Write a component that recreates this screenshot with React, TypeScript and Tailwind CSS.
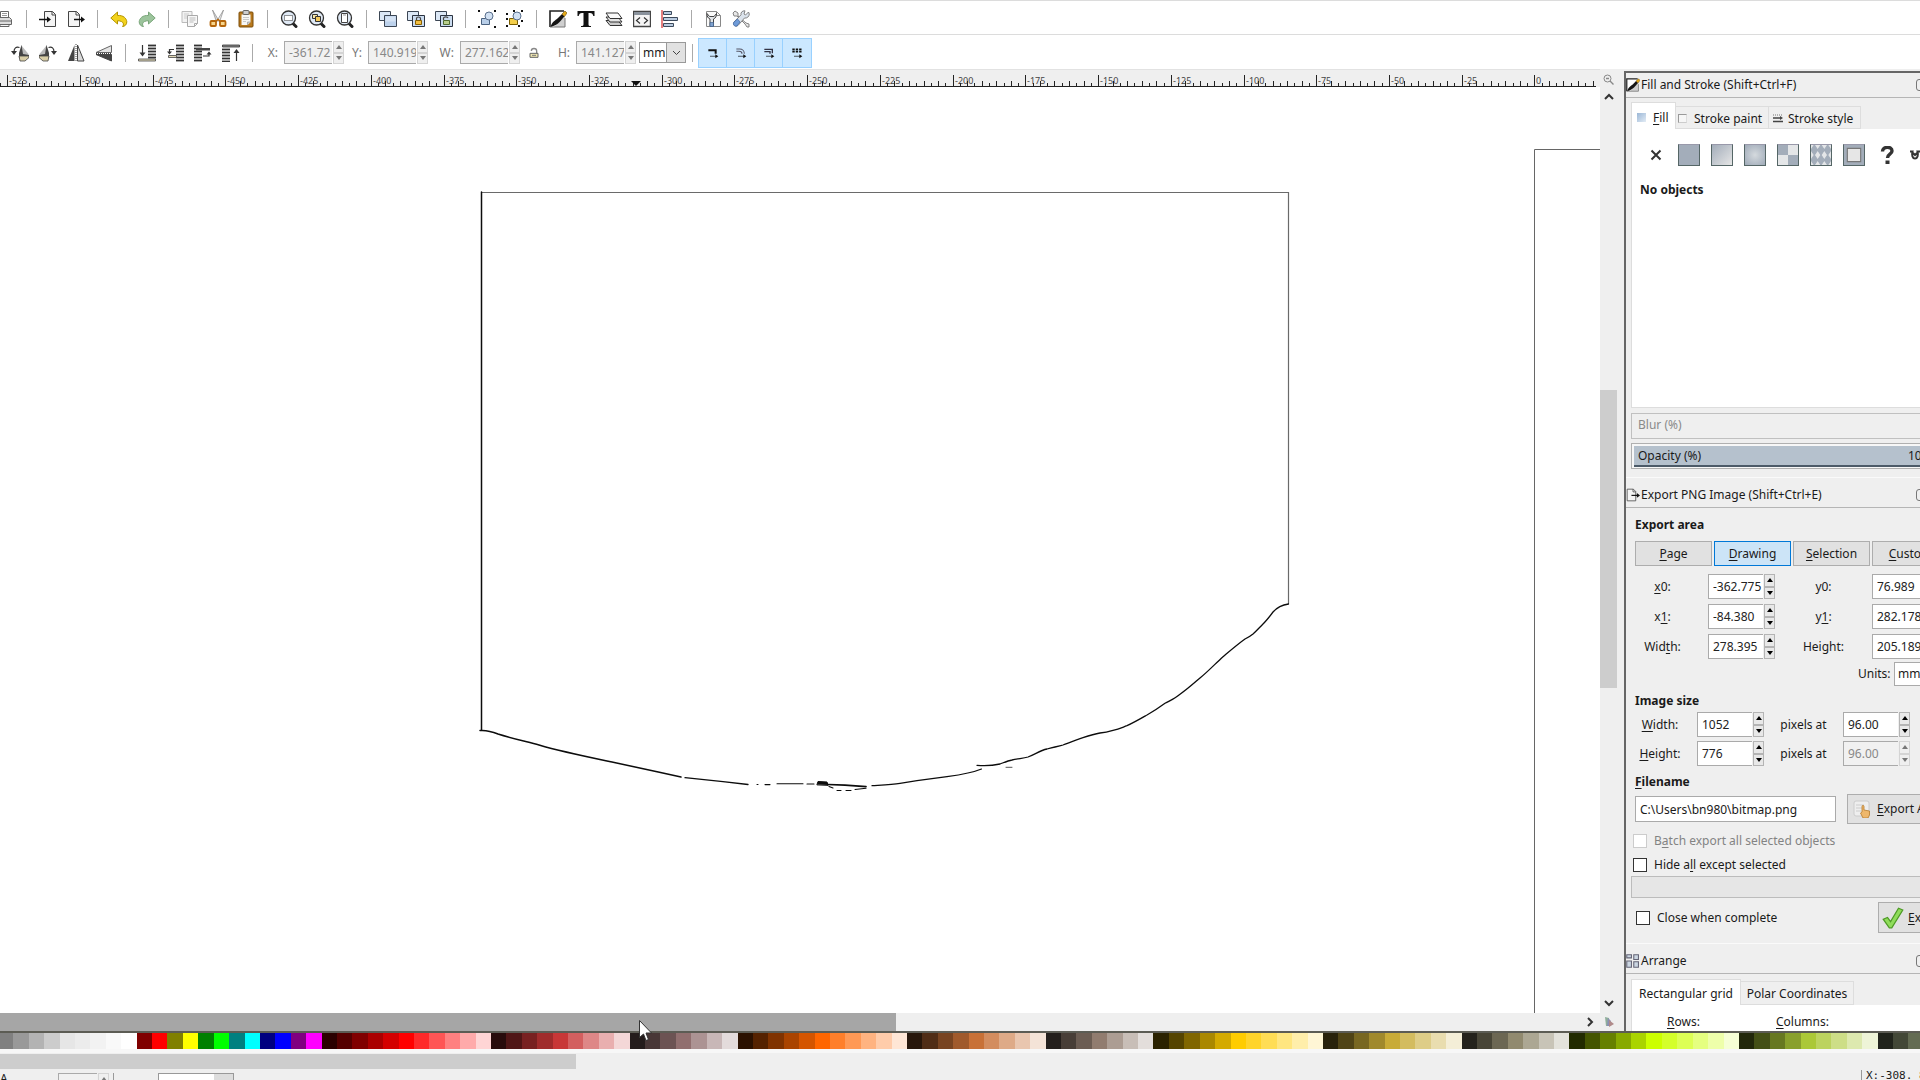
import type { ReactNode } from "react";
import { clsx } from "clsx";

const GRAYS = ["#808080", "#999999", "#b3b3b3", "#cccccc", "#e6e6e6", "#ececec", "#f2f2f2", "#f9f9f9", "#ffffff"];

const BASICS = [
  "#800000", "#ff0000", "#808000", "#ffff00", "#008000", "#00ff00",
  "#008080", "#00ffff", "#000080", "#0000ff", "#800080", "#ff00ff",
];

const REDS = [
  "#2b0000", "#550000", "#800000", "#aa0000", "#d40000", "#ff0000", "#ff2a2a", "#ff5555", "#ff8080", "#ffaaaa", "#ffd5d5",
  "#280b0b", "#501616", "#782121", "#a02c2c", "#c83737", "#d35f5f", "#de8787", "#e9afaf", "#f4d7d7",
  "#241c1c", "#483737", "#6c5353", "#916f6f", "#ac9393", "#c8b7b7", "#e3dbdb",
];

const ORANGES = [
  "#2b1100", "#552200", "#803300", "#aa4400", "#d45500", "#ff6600", "#ff7f2a", "#ff9955", "#ffb380", "#ffccaa", "#ffe6d5",
  "#28170b", "#502d16", "#784421", "#a05a2c", "#c87137", "#d38d5f", "#deaa87", "#e9c6af", "#f4e3d7",
  "#241f1c", "#483e37", "#6c5d53", "#917c6f", "#ac9d93", "#c8beb7", "#e3dedb",
];

const YELLOWS = [
  "#2b2200", "#554400", "#806600", "#aa8800", "#d4aa00", "#ffcc00", "#ffd42a", "#ffdd55", "#ffe680", "#ffeeaa", "#fff6d5",
  "#28220b", "#504416", "#786721", "#a0892c", "#c8ab37", "#d3bc5f", "#decd87", "#e9ddaf", "#f4eed7",
  "#24221c", "#484537", "#6c6753", "#918a6f", "#aca793", "#c8c4b7", "#e3e2db",
];

const LIMES = [
  "#222b00", "#445500", "#668000", "#88aa00", "#aad400", "#ccff00", "#d4ff2a", "#ddff55", "#e5ff80", "#eeffaa", "#f6ffd5",
  "#22280b", "#445016", "#677821", "#89a02c", "#abc837", "#bcd35f", "#cdde87", "#dde9af", "#eef4d7",
  "#21241c", "#434837", "#646c53",
];

const PALETTE = [...GRAYS, ...BASICS, ...REDS, ...ORANGES, ...YELLOWS, ...LIMES];

function Icon({ children, size = 18 }: { children: ReactNode; size?: number }) {
  return (
    <svg width={size} height={size} viewBox="0 0 18 18" fill="none" className="shrink-0" aria-hidden="true">
      {children}
    </svg>
  );
}

/* ---------- command bar icons ---------- */

const PrintIcon = () => (
  <Icon>
    <path d="M4.5 8V1.5h8V8" fill="#fff" stroke="#666" />
    <path d="M6 3.5h5M6 5.5h5" stroke="#999" />
    <path d="M1.5 9.5l2-2h10l2 2v5h-14z" fill="#ddd" stroke="#666" />
    <path d="M1.5 11h14M4 14.5h9v2H4z" stroke="#666" fill="#f6f6f6" />
  </Icon>
);

const ImportIcon = () => (
  <Icon>
    <path d="M5.5 1.5h8l3 3v12h-11z" fill="#f4f4f4" stroke="#444" />
    <path d="M13 1.5V5h3.500" stroke="#444" />
    <path d="M0 9.500h9" stroke="#111" strokeWidth="1.500" />
    <path d="M8 6.500l4 3-4 3z" fill="#111" />
  </Icon>
);

const ExportIcon = ({ size = 18 }: { size?: number }) => (
  <Icon size={size}>
    <path d="M1.500 1.500h8l3 3v12h-11z" fill="#f4f4f4" stroke="#444" />
    <path d="M9 1.500V5h3.500" stroke="#444" />
    <path d="M7 9.500h8" stroke="#111" strokeWidth="1.500" />
    <path d="M14 6.500l4 3-4 3z" fill="#111" />
  </Icon>
);

const UndoIcon = () => (
  <Icon>
    <path d="M.8 8L7.500 2v3.500c6-.5 9 3 9.300 6.200.2 3-2.300 4.800-4.300 4.800 1.500-1.500 2-5.500-5-5.800V14z" fill="#f2d21c" stroke="#b39300" />
  </Icon>
);

const RedoIcon = () => (
  <Icon>
    <path d="M17.200 8L10.500 2v3.500c-6-.5-9 3-9.300 6.200-.2 3 2.300 4.800 4.300 4.800-1.500-1.500-2-5.500 5-5.800V14z" fill="#9cc49c" stroke="#7aa67a" />
  </Icon>
);

const CopyIcon = () => (
  <Icon>
    <path d="M1 1.500h10v11H1z" fill="#f2f2f2" stroke="#bbb" />
    <path d="M3 4h5M3 6h3M3 8h3" stroke="#ccc" />
    <path d="M6.500 5.500h10v8l-3 3h-7z" fill="#f8f8f8" stroke="#a9a9a9" />
    <path d="M8.500 8h6M8.500 10h6M8.500 12h4" stroke="#bbb" />
    <path d="M13.500 16.500v-3h3" stroke="#a9a9a9" />
  </Icon>
);

const CutIcon = () => (
  <Icon>
    <path d="M3.500 0l6 10-2 2z" fill="#ddd" stroke="#888" strokeWidth=".7" />
    <path d="M14.500 0l-6 10 2 2z" fill="#eee" stroke="#888" strokeWidth=".7" />
    <rect x="1.500" y="11" width="5.500" height="5" rx="1" fill="#f6d58c" stroke="#b5660b" strokeWidth="1.800" />
    <rect x="11" y="11" width="5.500" height="5" rx="1" fill="#f6d58c" stroke="#b5660b" strokeWidth="1.800" />
    <path d="M6.500 11.500L9 9.500l2.500 2" stroke="#b5660b" strokeWidth="1.600" />
  </Icon>
);

const PasteIcon = () => (
  <Icon>
    <rect x="2" y="2" width="14" height="15" rx="1" fill="#b8791d" stroke="#7d4e0a" />
    <path d="M4.500 4.500h9V12l-3 3h-6z" fill="#f7f7f5" />
    <path d="M13.500 12h-3v3" fill="#ccc" stroke="#999" strokeWidth=".7" />
    <rect x="6" y=".5" width="6" height="4" rx="1" fill="#ccc" stroke="#666" />
    <path d="M6 7.500h6M6 9.500h6M6 11.500h3" stroke="#c9c9c9" />
  </Icon>
);

function MagnifierIcon({ children }: { children: ReactNode }) {
  return (
    <Icon>
      <path d="M13 13.500l3 3" stroke="#222" strokeWidth="3" strokeLinecap="round" />
      <circle cx="8.500" cy="8" r="7" fill="#dfe9f5" stroke="#333" strokeWidth="1.300" />
      {children}
    </Icon>
  );
}

const ZoomSelectionIcon = () => (
  <MagnifierIcon>
    <path d="M4.500 5.500h8v5h-8z" stroke="#333" strokeDasharray="1 1" fill="#fff" />
  </MagnifierIcon>
);

const ZoomDrawingIcon = () => (
  <MagnifierIcon>
    <path d="M4.500 4.500h5v4h-5z" fill="#f7e6a8" stroke="#333" />
    <path d="M7.500 6.500h5v5h-5z" fill="#f4c95c" stroke="#333" />
  </MagnifierIcon>
);

const ZoomPageIcon = () => (
  <MagnifierIcon>
    <path d="M5.500 3.500h6v9h-6z" fill="#fff" stroke="#444" />
    <path d="M7 5h3" stroke="#999" />
  </MagnifierIcon>
);

const DuplicateIcon = () => (
  <Icon>
    <path d="M.5 1.500h11v9H.5z" fill="#dce8f6" stroke="#3c4654" />
    <path d="M5.500 5.500h12v11h-12z" fill="#bdd2ec" stroke="#3c4654" />
    <path d="M6.500 6.500h10v5h-10z" fill="#d5e3f4" />
  </Icon>
);

function CloneIcon({ unlinked }: { unlinked?: boolean }) {
  return (
    <Icon>
      <path d="M.5 1.500h11v9H.5z" fill="#dce8f6" stroke="#3c4654" />
      <path d="M5.500 5.500h12v11h-12z" fill="#cbdcf0" stroke="#2b3340" />
      <path d={unlinked ? "M8.500 10V8c.5-1.500 4-1.500 4.500 0" : "M9.500 11V8.500c0-2 4-2 4 0V11"} stroke="#444" strokeWidth="1.200" />
      <path d="M8.500 10.500h6v4h-6z" fill={unlinked ? "#b9cf8c" : "#f4c042"} stroke={unlinked ? "#4f6a2f" : "#8a6100"} />
    </Icon>
  );
}

function GroupIcon({ ungroup }: { ungroup?: boolean }) {
  return (
    <Icon>
      <path d="M3.500 8.500h8v6h-8z" fill={ungroup ? "#f4cf4a" : "#b9cfe9"} stroke={ungroup ? "#7c6000" : "#4b6280"} />
      <circle cx="11" cy="6" r="4" fill="#d2e1f3" stroke="#5a6f8c" />
      <path
        d={
          ungroup
            ? "M0 3h2v2H0zM7 0h2v2H7zM15 0h2v2h-2zM0 8h2v2H0zM15 10h2v2h-2zM0 15h2v2H0zM12 15h2v2h-2z"
            : "M0 0h2v2H0zM16 0h2v2h-2zM0 16h2v2H0zM16 16h2v2h-2z"
        }
        fill="#111"
      />
    </Icon>
  );
}

const FillStrokeIcon = ({ size = 18 }: { size?: number }) => (
  <Icon size={size}>
    <path d="M1 1h14L1 15z" fill="#fff" />
    <path d="M16 6v11H5z" fill="#cfcfcf" />
    <path d="M1 17V1h14" stroke="#222" strokeWidth="1.600" />
    <path d="M1 17h15V8" stroke="#777" />
    <path d="M1.500 17C3 12 6 10.500 9 8l4-4 2.500 2.500C12 10 10 15 1.500 17z" fill="#151515" />
    <path d="M13 4l3-3 2 2-2.500 3.500z" fill="#e3a91a" stroke="#6b4a00" strokeWidth=".6" />
  </Icon>
);

const TextIcon = () => (
  <Icon>
    <path d="M.5 1h17v5h-1.200c-.4-2-1.300-3-3.300-3h-1.500v11.500c0 1 .7 1.500 2.500 1.500v1H4v-1c1.800 0 2.500-.5 2.500-1.500V3H5C3 3 2.100 4 1.700 6H.5z" fill="#111" />
  </Icon>
);

const LayersIcon = () => (
  <Icon>
    <path d="M1 10.500l4 5h12l-4-5z" fill="#ccc" stroke="#333" />
    <path d="M1 7l4 5h12l-4-5z" fill="#e3e3e3" stroke="#333" />
    <path d="M1 3l4 5.500h12L13 3z" fill="#fafafa" stroke="#333" />
  </Icon>
);

const XmlIcon = () => (
  <Icon>
    <path d="M.5 1.500h17v15H.5z" fill="#f5f5f5" stroke="#444" strokeWidth="1.400" />
    <path d="M1 2h16v3H1z" fill="#8a929c" />
    <path d="M7 7.500L3.500 10.500 7 13.500M11 7.500l3.500 3-3.500 3" stroke="#333" strokeWidth="1.200" />
  </Icon>
);

const AlignIcon = () => (
  <Icon>
    <path d="M1 0v18" stroke="#c00" />
    <path d="M2.500 1.500h8v3h-8zM2.500 7.500h14v3h-14zM2.500 13.500h10v3h-10z" fill="#b9cbe0" stroke="#3c4a5c" />
  </Icon>
);

const DocPropsIcon = () => (
  <Icon>
    <path d="M2.500 1.500h10l4 4v11h-14z" fill="#fbfbfb" stroke="#888" />
    <path d="M12.500 1.500v4h4" stroke="#888" />
    <path d="M3 3.500c0 3 .8 4.500 3 5.500v7h3.500V9c2.200-1 3-2.500 3-5.500L10 6.500H5.500z" fill="#e0e4e8" stroke="#444" />
    <path d="M6 12.500h3.500v4H6z" fill="#7fa2cf" stroke="#40608c" strokeWidth=".7" />
  </Icon>
);

const PrefsIcon = () => (
  <Icon>
    <path d="M1 3l2-2 3 2v3l8 7 3 1v3l-2 0-2-3-8-8H2z" fill="#e8e8e8" stroke="#777" strokeWidth=".9" />
    <path d="M16.500 2l-3 3-1.500-1L13 .8c-3-.3-4.500 2-4 4L2 12c-1.500 2 1 5.500 4 3.500L12.500 8c2.500.5 4.800-1.500 4.800-4z" fill="#dbe3ec" stroke="#777" strokeWidth=".9" />
    <path d="M2 12l3.500-3 2.500 3-3 4c-3 1-4.500-2-3-4z" fill="#6f9bd8" stroke="#3c66a3" strokeWidth=".7" />
  </Icon>
);

/* ---------- tool control icons ---------- */

function RotateIcon({ right }: { right?: boolean }) {
  const art = (
    <>
      <path d="M10 1v12h7.500v-3z" fill="#bbb" />
      <path d="M10.500 1l1.500 9 6 1v3H8V9z" fill="#444" />
      <path d="M8 12h10v1.500L14 17H9z" fill="#d8cda6" stroke="#444" strokeWidth=".8" />
      <path d="M8.500 3.500C5 2.500 3 4 3 8" stroke="#333" strokeWidth="1.200" />
      <path d="M0 7h6l-3 4z" fill="#333" />
    </>
  );
  return <Icon>{right ? <g transform="translate(18 0) scale(-1 1)">{art}</g> : art}</Icon>;
}

const FlipHorizontalIcon = () => (
  <Icon>
    <path d="M7.500 1v16H1z" fill="#444" />
    <path d="M10.500 1v16H17z" fill="#d9d9d9" stroke="#444" />
    <path d="M9 0v18" stroke="#444" strokeDasharray="1 1" />
  </Icon>
);

const FlipVerticalIcon = () => (
  <Icon>
    <path d="M16.500 1.500v7H1z" fill="#e4e4e4" stroke="#666" />
    <path d="M16.500 17v-6.500H1z" fill="#444" stroke="#444" />
    <path d="M1 9.500h16" stroke="#444" strokeDasharray="1 1" />
  </Icon>
);

const StripedStack = ({ x, y, rows }: { x: number; y: number; rows: number }) => (
  <>
    {Array.from({ length: rows }, (_, i) => (
      <path key={i} d={`M${x} ${y + i * 3}h8`} stroke="#333" strokeWidth="1.800" />
    ))}
  </>
);

const LowerBottomIcon = () => (
  <Icon>
    <StripedStack x={10} y={1.5} rows={5} />
    <path d="M4.500 1v9" stroke="#333" strokeWidth="1.200" />
    <path d="M1.500 8.500h6l-3 4z" fill="#333" />
    <path d="M.5 15h17v2H.5z" fill="#e2d9b8" stroke="#444" strokeWidth=".8" />
  </Icon>
);

const LowerIcon = () => (
  <Icon>
    <StripedStack x={10} y={1.5} rows={6} />
    <path d="M8 5.500H3.500V8" stroke="#333" strokeWidth="1.200" />
    <path d="M1 7.500h5l-2.500 3z" fill="#333" />
    <path d="M2.500 11.500h8v2h-8z" fill="#e2d9b8" stroke="#444" strokeWidth=".8" />
  </Icon>
);

const RaiseIcon = () => (
  <Icon>
    <StripedStack x={0} y={1.5} rows={6} />
    <path d="M2 4h14v2.500H2z" fill="#444" />
    <path d="M9 12h6V9.500" stroke="#333" strokeWidth="1.200" />
    <path d="M12.500 10.500h5l-2.500-3z" fill="#333" />
  </Icon>
);

const RaiseTopIcon = () => (
  <Icon>
    <path d="M.5 1h17v2H.5z" fill="#888" stroke="#333" strokeWidth=".8" />
    <StripedStack x={0} y={5.5} rows={5} />
    <path d="M14.500 17V8" stroke="#333" strokeWidth="1.200" />
    <path d="M11.500 9h6l-3-4z" fill="#333" />
  </Icon>
);

const LockIcon = () => (
  <Icon size={12}>
    <path d="M5 6c0-5 8-5 8 0v4" stroke="#888" strokeWidth="2" />
    <path d="M3 9.500h12v6H3z" fill="#efe6b0" stroke="#666" strokeWidth="1.500" />
    <path d="M6 12.500h6" stroke="#777" strokeWidth="1.500" />
  </Icon>
);

const affectIcons = [
  {
    label: "Scale stroke width",
    art: <path d="M1 4h11v5" stroke="#111" strokeWidth="3" />,
  },
  {
    label: "Scale rounded corners",
    art: <path d="M1 2h5c4 0 7 3 7 7M1 5.500h4c3 0 4.500 1.500 4.500 3.500" stroke="#556" strokeWidth="1.600" />,
  },
  {
    label: "Move gradients",
    art: <path d="M1 2.500h12v6M1 6h8.500v3" stroke="#334" strokeWidth="2" />,
  },
  {
    label: "Move patterns",
    art: <path d="M1 2.500h14M1 6h14" stroke="#111" strokeWidth="2.500" strokeDasharray="3.600 1.500" />,
  },
];

const Chevron = ({ d }: { d: string }) => (
  <svg width="10" height="10" viewBox="0 0 10 10" fill="none" aria-hidden="true">
    <path d={d} stroke="#333" strokeWidth="2" />
  </svg>
);

/* ---------- small shared controls ---------- */

// An underscore in front of a letter marks the keyboard shortcut
function Mnemonic({ text }: { text: string }) {
  const at = text.indexOf("_");
  if (at < 0) return <>{text}</>;
  return (
    <span>
      {text.slice(0, at)}
      <u className="underline-offset-2">{text[at + 1]}</u>
      {text.slice(at + 2)}
    </span>
  );
}

type SpinProps = {
  id: string;
  value: string;
  disabled?: boolean;
  className?: string;
};

function Spin({ id, value, disabled, className }: SpinProps) {
  const arrow = disabled ? "fill-[#777]" : "fill-black";
  const button = clsx(
    "flex flex-1 items-center justify-center border",
    disabled ? "border-[#d4d4d4] bg-[#efefef]" : "border-[#b4b4b4] bg-[#e8e8e8]"
  );
  return (
    <div className={clsx("flex shrink-0 gap-px", className)}>
      <input
        id={id}
        defaultValue={value}
        disabled={disabled}
        className={clsx(
          "h-full min-w-0 flex-1 border border-r-0 border-[#aaa] pl-1 text-[12px] outline-none",
          disabled ? "bg-[#f1f1f1] text-[#888]" : "bg-white text-[#222]"
        )}
      />
      <div className="flex w-[11px] flex-col">
        <button type="button" aria-label="Increase" className={button}>
          <svg width="6" height="4" viewBox="0 0 6 4" className={arrow}><path d="M3 0l3 4H0z" /></svg>
        </button>
        <button type="button" aria-label="Decrease" className={button}>
          <svg width="6" height="4" viewBox="0 0 6 4" className={arrow}><path d="M3 4l3-4H0z" /></svg>
        </button>
      </div>
    </div>
  );
}

function Check({ id, text, disabled }: { id: string; text: string; disabled?: boolean }) {
  return (
    <div className="flex h-5 items-center gap-[7px]">
      <input
        id={id}
        type="checkbox"
        disabled={disabled}
        className={clsx("size-[14px] appearance-none border bg-white", disabled ? "border-[#ccc]" : "border-[#333]")}
      />
      <label htmlFor={id} className={disabled ? "text-[#838383]" : ""}>
        <Mnemonic text={text} />
      </label>
    </div>
  );
}

const Separator = ({ className = "w-[15px]" }: { className?: string }) => (
  <div className={clsx("flex shrink-0 justify-center", className)}>
    <div className="h-[18px] w-px bg-[#aaa]" />
  </div>
);

function ToolButton({ label, children }: { label: string; children: ReactNode }) {
  return (
    <button type="button" aria-label={label} className="flex h-7 w-7 shrink-0 items-center justify-center">
      {children}
    </button>
  );
}

/* ---------- toolbars ---------- */

function CommandBar() {
  return (
    <div className="flex h-[35px] items-center border-t border-b border-[#dcdcdc] bg-white pt-[3px]">
      <div className="-ml-[9px] flex items-center">
        <ToolButton label="Print"><PrintIcon /></ToolButton>
        <Separator />
        <ToolButton label="Import"><ImportIcon /></ToolButton>
        <ToolButton label="Export"><ExportIcon /></ToolButton>
        <Separator />
        <ToolButton label="Undo"><UndoIcon /></ToolButton>
        <ToolButton label="Redo"><RedoIcon /></ToolButton>
        <Separator />
        <ToolButton label="Copy"><CopyIcon /></ToolButton>
        <ToolButton label="Cut"><CutIcon /></ToolButton>
        <ToolButton label="Paste"><PasteIcon /></ToolButton>
        <Separator />
        <ToolButton label="Zoom selection"><ZoomSelectionIcon /></ToolButton>
        <ToolButton label="Zoom drawing"><ZoomDrawingIcon /></ToolButton>
        <ToolButton label="Zoom page"><ZoomPageIcon /></ToolButton>
        <Separator />
        <ToolButton label="Duplicate"><DuplicateIcon /></ToolButton>
        <ToolButton label="Clone"><CloneIcon /></ToolButton>
        <ToolButton label="Unlink clone"><CloneIcon unlinked /></ToolButton>
        <Separator />
        <ToolButton label="Group"><GroupIcon /></ToolButton>
        <ToolButton label="Ungroup"><GroupIcon ungroup /></ToolButton>
        <Separator />
        <ToolButton label="Fill and Stroke"><FillStrokeIcon /></ToolButton>
        <ToolButton label="Text and Font"><TextIcon /></ToolButton>
        <ToolButton label="Layers"><LayersIcon /></ToolButton>
        <ToolButton label="XML Editor"><XmlIcon /></ToolButton>
        <ToolButton label="Align and Distribute"><AlignIcon /></ToolButton>
        <Separator />
        <ToolButton label="Document Properties"><DocPropsIcon /></ToolButton>
        <ToolButton label="Preferences"><PrefsIcon /></ToolButton>
      </div>
    </div>
  );
}

function ToolSpin({ id, label, value, labelWidth }: { id: string; label: string; value: string; labelWidth: string }) {
  return (
    <>
      <label htmlFor={id} className={clsx("shrink-0 pr-[6px] text-right text-[#777]", labelWidth)}>{label}</label>
      <Spin id={id} value={value} disabled className="h-[23px] w-[60px]" />
    </>
  );
}

function ControlsBar() {
  return (
    <div className="flex h-[34px] items-center bg-white pt-px pl-[6px]">
      <ToolButton label="Rotate left"><RotateIcon /></ToolButton>
      <ToolButton label="Rotate right"><RotateIcon right /></ToolButton>
      <ToolButton label="Flip horizontal"><FlipHorizontalIcon /></ToolButton>
      <ToolButton label="Flip vertical"><FlipVerticalIcon /></ToolButton>
      <Separator />
      <ToolButton label="Lower to bottom"><LowerBottomIcon /></ToolButton>
      <ToolButton label="Lower"><LowerIcon /></ToolButton>
      <ToolButton label="Raise"><RaiseIcon /></ToolButton>
      <ToolButton label="Raise to top"><RaiseTopIcon /></ToolButton>
      <Separator />
      <ToolSpin id="pos-x" label="X:" value="-361.72" labelWidth="w-6" />
      <ToolSpin id="pos-y" label="Y:" value="140.919" labelWidth="w-6" />
      <ToolSpin id="size-w" label="W:" value="277.162" labelWidth="w-8" />
      <ToolButton label="Lock ratio"><LockIcon /></ToolButton>
      <ToolSpin id="size-h" label="H:" value="141.127" labelWidth="w-7" />
      <div className="relative ml-[3px] h-[21px] w-[47px]">
        <select aria-label="Unit" className="block h-full w-full appearance-none border border-[#999] bg-white pl-[3px] text-[12px] leading-4">
          <option>mm</option>
        </select>
        <div className="pointer-events-none absolute inset-y-0 right-0 flex w-5 items-center justify-center border border-[#999] bg-[#e1e1e1]">
          <svg width="9" height="6" viewBox="0 0 9 6" fill="none"><path d="M1 1l3.500 3.500L8 1" stroke="#444" /></svg>
        </div>
      </div>
      <Separator className="w-3" />
      <div className="flex h-[30px] border border-[#99d1ff]">
        {affectIcons.map((item) => (
          <button
            key={item.label}
            type="button"
            aria-label={item.label}
            className="flex w-7 items-center justify-center border-r border-[#99d1ff] bg-[#cce8ff] last:border-r-0"
          >
            <Icon size={12}>
              <g transform="translate(1 1)">
                {item.art}
                <path d="M4 13h8" stroke="#111" strokeWidth="1.600" strokeDasharray="2 1" />
                <path d="M11.500 10l4.500 3-4.500 3z" fill="#111" />
              </g>
            </Icon>
          </button>
        ))}
      </div>
    </div>
  );
}

/* ---------- canvas ---------- */

const RULER_ZERO = 1534.9;
const RULER_STEP = 7.272;

function Ruler() {
  const ticks = [];
  for (let i = -211; i <= 8; i++) {
    const x = Math.floor(RULER_ZERO + i * RULER_STEP) + 0.5;
    const top = i % 10 === 0 ? 5 : i % 2 === 0 ? 11 : 13;
    ticks.push(<path key={i} d={`M${x} ${top}V17`} stroke="#222" />);
  }
  const labels = [];
  for (let n = -525; n <= 0; n += 25) {
    labels.push(
      <text key={n} x={Math.floor(RULER_ZERO + (n / 2.5) * RULER_STEP) + 2} y="14" fontSize="9" fill="#444">
        {n}
      </text>
    );
  }
  return (
    <div className="h-[18px] shrink-0 border-t border-[#e2e2e2] bg-[#efefef] pr-1">
      <svg className="block h-[17px] w-full" aria-hidden="true">
        {labels}
        {ticks}
        <path d="M0 16.500H1597" stroke="#222" />
        <path d="M631 11h10l-5 5z" fill="#111" />
      </svg>
    </div>
  );
}

function Canvas() {
  return (
    <div className="min-h-0 flex-1 overflow-hidden bg-white">
      <svg className="block h-full w-full" fill="none" aria-label="Drawing">
        <path d="M1534.500 930V62.500H1700" stroke="#666" />
        <path d="M481 105.500H1288.500V517" stroke="#6a6a6a" strokeWidth="1.200" />
        <g stroke="#0c0c0c" strokeLinecap="round" strokeLinejoin="round">
          <path d="M481.500 105V643" strokeWidth="1.500" />
          <path
            d="M480 643.500C486 643 492 644.500 498 647C512 651.500 526 654.500 539 658C563 665 588 670 612 675C636 680 658 685 681 690"
            strokeWidth="1.500"
          />
          <path d="M685 690.700L723 694.700L748 697.500" strokeWidth="1.300" />
          <path d="M757 697.500h1M765 697.600h5M777 696.700H803M807 697h7" strokeWidth="1.100" />
          <path d="M817 697.500l1-3 9 .5 1 3z" fill="#0c0c0c" />
          <path d="M828 697.500L845 698.200L866 699.700" strokeWidth="1.700" />
          <path d="M829 699.500l4 1.500M837 703.500h4M846 703.500h5M855 702.500L866 701.300" strokeWidth="1.100" />
          <path d="M872 698.700C882 698 892 697.500 900 696.300L917 693.700L947 689.700C959 688 972 686 981.500 682" strokeWidth="1.200" />
          <path
            d="M977 678.300C986 679 992 678.700 1000 677C1004 675.500 1008 673.700 1012 673C1018 671.500 1023 671.500 1028 670C1035 667.500 1040 663.500 1047 662C1052 660.500 1058 659.500 1063 658C1071 655 1076 653 1083 650.700C1088 649 1094 647 1100 646C1105 645.500 1109 644.500 1113 643.300C1119 642 1122 640.500 1127 638.700C1134 635.500 1140 632 1147 628C1154 624 1160 620 1165 616.300C1170 613.500 1175 611.500 1179 608C1187 602.500 1193 597 1200 591C1208 584.500 1215 577 1223 569.700C1231 563 1238 557 1245 552C1248 550.500 1250 549.500 1253 547C1257 543.500 1259 541 1263 537C1267 533 1270 529 1273 525C1277 520.500 1281 518 1288.500 517"
            strokeWidth="1.300"
          />
          <path d="M1006 680.300h6" stroke="#555" />
        </g>
      </svg>
    </div>
  );
}

function Workspace() {
  return (
    <div className="flex min-w-0 flex-1 flex-col">
      <Ruler />
      <Canvas />
      <div className="flex h-[18px] shrink-0 items-center justify-between bg-[#efefef]">
        <div className="h-full w-[56%] bg-[#a6a6a6]" />
        <button type="button" aria-label="Scroll right" className="pr-[5px]"><Chevron d="M3 1l4 4-4 4" /></button>
      </div>
    </div>
  );
}

function VerticalScroll() {
  return (
    <div className="flex w-6 shrink-0 flex-col bg-[#efefef] pr-[7px] pt-[3px]">
      <button type="button" aria-label="Zoom to window" className="flex h-[14px] items-center justify-center">
        <svg width="11" height="11" viewBox="0 0 11 11" fill="none">
          <circle cx="4.500" cy="4.500" r="3.500" stroke="#888" />
          <path d="M3 4.500h3M7 7l3.500 3.500" stroke="#888" strokeWidth="1.400" />
        </svg>
      </button>
      <button type="button" aria-label="Scroll up" className="flex h-[22px] items-center justify-center">
        <Chevron d="M1 7l4-4 4 4" />
      </button>
      <div className="flex min-h-0 flex-1 flex-col">
        <div className="flex-[282]" />
        <div className="flex-[299] bg-[#cdcdcd]" />
        <div className="flex-[305]" />
      </div>
      <button type="button" aria-label="Scroll down" className="flex h-5 items-center justify-center">
        <Chevron d="M1 3l4 4 4-4" />
      </button>
      <button type="button" aria-label="Color management" className="flex h-[18px] items-center justify-center">
        <svg width="10" height="10" viewBox="0 0 10 10">
          <path d="M1 0l4 1 1 8-4 0z" fill="#8fae9b" />
          <path d="M4 1l3 3-2 5H3z" fill="#8a8fb5" />
          <path d="M5 3l5 4-5 3z" fill="#b08a8a" />
        </svg>
      </button>
    </div>
  );
}

/* ---------- dock ---------- */

function DockHeader({ icon, title, className }: { icon: ReactNode; title: string; className: string }) {
  return (
    <div className={clsx("flex items-center border-b border-[#b5b5b5]", className)}>
      {icon}
      <h2 className="w-[276px] pl-px">{title}</h2>
      <button type="button" aria-label="Iconify" className="size-3 shrink-0 rounded-[3px] border border-[#777]" />
    </div>
  );
}

const paintButtons = [
  {
    label: "No paint",
    art: <path d="M4.500 4.500l9 9M13.500 4.500l-9 9" stroke="#333" strokeWidth="2" />,
  },
  { label: "Flat color", box: "bg-[#a3adba]" },
  { label: "Linear gradient", box: "bg-linear-to-br from-[#a3adba] to-[#e6e6e6]" },
  { label: "Radial gradient", box: "bg-radial from-[#d5dade] to-[#9faab8]" },
  {
    label: "Mesh gradient",
    box: "bg-[#e4e6e8]",
    art: <path d="M0 0h9v9H0zM9 9h9v9H9z" fill="#a3adba" />,
  },
  {
    label: "Pattern",
    box: "bg-[#e4e6e8]",
    art: <path d="M3 0l3 4.500L3 9 0 4.500zM9 0l3 4.500L9 9 6 4.500zM15 0l3 4.500L15 9l-3-4.500zM3 9l3 4.500L3 18l-3-4.500zM9 9l3 4.500L9 18l-3-4.500zM15 9l3 4.500-3 4.500-3-4.500z" fill="#a3adba" stroke="#a3adba" />,
  },
  {
    label: "Swatch",
    box: "bg-[#a3adba]",
    art: <path d="M3 3h12v12H3z" fill="#e6e6e6" stroke="#777" />,
  },
  {
    label: "Unset paint",
    art: <path d="M4.500 5.500C4.500 0 14 0 14 5c0 3.500-4.500 3-4.500 7" stroke="#333" strokeWidth="3.400" />,
    dot: true,
  },
  {
    label: "Fill rule",
    box: "-ml-[5px] border-0",
    art: <path d="M4 5.500h2.500C5.500 9 6.500 12.500 9 12.500S12.500 9 11.500 5.500H14M7 7l2 2 2-2" stroke="#333" strokeWidth="2" />,
  },
];

function FillAndStroke() {
  return (
    <section>
      <DockHeader icon={<FillStrokeIcon size={14} />} title="Fill and Stroke (Shift+Ctrl+F)" className="h-[25px]" />
      <div className="ml-[5px] pt-1">
        <div className="flex h-[27px] items-end">
          <button type="button" className="flex h-[27px] w-[45px] items-center gap-[7px] border border-b-0 border-[#ddd] bg-white pt-[3px] pl-[5px]">
            <span className="size-[9px] bg-linear-to-br from-[#9bb7d6] to-[#e3ecf5]" />
            <Mnemonic text="_Fill" />
          </button>
          <button type="button" className="flex h-[23px] w-[93px] items-center gap-[7px] border border-l-0 border-[#ddd] pt-[2px] pl-[2px] whitespace-nowrap">
            <span className="size-[9px] shrink-0 border border-[#999] border-r-[#ddd] border-b-[#ccc] bg-[#f6f6f6]" />
            Stroke paint
          </button>
          <button type="button" className="flex h-[23px] w-[92px] items-center gap-[5px] border border-l-0 border-[#ddd] pt-[2px] pl-1 whitespace-nowrap">
            <svg width="10" height="9" viewBox="0 0 10 9" fill="none" className="shrink-0">
              <path d="M0 1h10" stroke="#777" strokeDasharray="1 1" />
              <path d="M0 4h7M0 7.500h10" stroke="#444" strokeWidth="1.500" />
              <path d="M7 2l3 2-3 2z" fill="#444" />
            </svg>
            Stroke style
          </button>
        </div>
        <div className="h-[279px] border-b border-l border-[#ddd] bg-white pl-2">
          <div className="flex gap-[11px] pt-[15px] pl-[5px]">
            {paintButtons.map((item) => (
              <button
                key={item.label}
                type="button"
                aria-label={item.label}
                className={clsx(
                  "flex size-[22px] shrink-0 items-center justify-center",
                  item.box?.startsWith("bg") && "border border-[#566] border-t-[#99a]",
                  item.box
                )}
              >
                {item.art && (
                  <Icon size={item.box?.startsWith("bg") ? 20 : 18}>
                    {item.art}
                    {item.dot && <path d="M7.500 14.500h4V18h-4z" fill="#333" />}
                  </Icon>
                )}
              </button>
            ))}
          </div>
          <p className="pt-[14px] font-bold">No objects</p>
        </div>
        <div className="mt-[5px] flex h-[26px] items-center border border-[#c0c0c0] pb-[2px] pl-[6px] text-[#8a8a8a]">Blur (%)</div>
        <div className="mt-1 h-[26px] border border-[#b0b0b0] bg-[#f7f7f7] pt-[2px] pl-[2px]">
          <div className="flex h-[21px] items-center border-b-2 border-[#4c5a68] bg-[#b5c1cd] pl-1">
            <span className="w-[270px]">Opacity (%)</span>
            <span>100.0</span>
          </div>
        </div>
      </div>
    </section>
  );
}

const exportAreas = ["_Page", "_Drawing", "_Selection", "_Custom"];

const areaRows = [
  { left: "_x0:", leftValue: "-362.775", right: "y0:", rightValue: "76.989" },
  { left: "x_1:", leftValue: "-84.380", right: "y_1:", rightValue: "282.178" },
  { left: "Wid_th:", leftValue: "278.395", right: "Height:", rightValue: "205.189" },
];

function ExportPng() {
  return (
    <section className="mt-[8px]">
      <DockHeader
        icon={<ExportIcon size={14} />}
        title="Export PNG Image (Shift+Ctrl+E)"
        className="h-[31px] border-t border-t-[#fafafa] pt-[5px]"
      />
      <div className="pl-[9px]">
        <h3 className="mt-[7px] h-5 font-bold">Export area</h3>
        <div className="mt-[6px] flex gap-[2px]">
          {exportAreas.map((area) => (
            <button
              key={area}
              type="button"
              className={clsx(
                "h-[25px] w-[77px] shrink-0 border",
                area === "_Drawing" ? "border-[#0078d7] bg-[#cce4f7]" : "border-[#adadad] bg-[#e1e1e1]"
              )}
            >
              <Mnemonic text={area} />
            </button>
          ))}
        </div>
        <div className="mt-2 flex flex-col gap-[5px]">
          {areaRows.map((row, i) => (
            <div key={row.left} className="flex items-center">
              <label htmlFor={`area-left-${i}`} className="w-[55px] text-center"><Mnemonic text={row.left} /></label>
              <Spin id={`area-left-${i}`} value={row.leftValue} className="ml-[18px] h-[25px] w-[67px]" />
              <label htmlFor={`area-right-${i}`} className="w-[97px] text-center"><Mnemonic text={row.right} /></label>
              <Spin id={`area-right-${i}`} value={row.rightValue} className="h-[25px] w-[67px]" />
            </div>
          ))}
        </div>
        <div className="mt-[3px] flex h-6 items-center pl-[223px]">
          <label htmlFor="export-units" className="w-9">Units:</label>
          <select id="export-units" className="h-full w-14 appearance-none border border-[#aaa] bg-white pl-[3px]">
            <option>mm</option>
          </select>
        </div>

        <h3 className="mt-[5px] h-5 font-bold">Image size</h3>
        <div className="mt-px flex flex-col gap-1">
          <div className="flex items-center">
            <label htmlFor="image-width" className="w-[50px] text-center"><Mnemonic text="_Width:" /></label>
            <Spin id="image-width" value="1052" className="ml-3 h-[25px] w-[67px]" />
            <label htmlFor="dpi-x" className="w-[79px] text-center">pixels at</label>
            <Spin id="dpi-x" value="96.00" className="h-[25px] w-[67px]" />
          </div>
          <div className="flex items-center">
            <label htmlFor="image-height" className="w-[50px] text-center"><Mnemonic text="_Height:" /></label>
            <Spin id="image-height" value="776" className="ml-3 h-[25px] w-[67px]" />
            <label htmlFor="dpi-y" className="w-[79px] text-center">pixels at</label>
            <Spin id="dpi-y" value="96.00" disabled className="h-[25px] w-[67px]" />
          </div>
        </div>

        <label htmlFor="filename" className="mt-[6px] block h-5 font-bold"><Mnemonic text="_Filename" /></label>
        <div className="mt-[2px] flex h-[30px] items-center gap-[11px]">
          <input
            id="filename"
            defaultValue="C:\Users\bn980\bitmap.png"
            className="h-[26px] w-[201px] shrink-0 border border-[#aaa] bg-white pl-1 outline-none"
          />
          <button type="button" className="flex h-full w-[100px] shrink-0 items-center gap-[6px] border border-[#adadad] bg-[#e1e1e1] pl-[5px]">
            <Icon>
              <rect x="1" y="1" width="15" height="15" rx="2" fill="#eee" stroke="#ccc" />
              <path d="M3 5h8M3 8h6M3 11h5" stroke="#ccc" />
              <path d="M9 6.500c0-1.500 2-1.500 2 0V10l5.500 1v4l-1.500 3h-5L7.500 13l1.500-1z" fill="#eeb76b" stroke="#b57b2c" strokeWidth=".8" />
            </Icon>
            <Mnemonic text="_Export As..." />
          </button>
        </div>
        <div className="mt-[7px] -ml-[2px] flex flex-col gap-1">
          <Check id="batch" text="B_atch export all selected objects" disabled />
          <Check id="hide" text="Hide a_ll except selected" />
        </div>
      </div>
      <div className="mt-px ml-[5px] h-[22px] border border-[#bcbcbc] bg-[#e6e6e6]" />
      <div className="mt-1 flex h-[31px] items-center justify-between pl-[10px]">
        <Check id="close" text="Close when complete" />
        <button type="button" className="flex h-full w-[93px] items-center gap-1 border border-[#adadad] bg-[#e1e1e1] pl-[3px]">
          <Icon size={22}>
            <path d="M1 10l3.500-1.500L7 12l6.500-11L17 2.500 8 17H6z" fill="#8fdc5a" stroke="#4d9a25" />
          </Icon>
          <Mnemonic text="_Export" />
        </button>
      </div>
    </section>
  );
}

function Arrange() {
  return (
    <section className="mt-[10px]">
      <DockHeader
        icon={
          <Icon size={14}>
            <path d="M1 1h6v4H1zM10 1h6v6h-6zM1 9h6v8H1zM10 10h6v7h-6z" fill="#cbd6e2" stroke="#667" strokeWidth="1.400" />
          </Icon>
        }
        title="Arrange"
        className="h-[31px] border-t border-t-[#fafafa] pt-1"
      />
      <div className="ml-[5px] pt-[5px]">
        <div className="flex h-[26px] items-end">
          <button type="button" className="h-[26px] w-[110px] border border-b-0 border-[#ddd] bg-white pt-[2px] whitespace-nowrap">Rectangular grid</button>
          <button type="button" className="h-6 w-[113px] border border-l-0 border-[#ddd] pt-[2px] whitespace-nowrap">Polar Coordinates</button>
        </div>
        <div className="flex h-[60px] border-l border-[#ddd] bg-white pt-[7px] pl-[35px]">
          <span className="w-[109px]"><Mnemonic text="_Rows:" /></span>
          <span><Mnemonic text="_Columns:" /></span>
        </div>
      </div>
    </section>
  );
}

function Dock() {
  return (
    <div className="flex w-[296px] shrink-0 flex-col bg-[#efefef] pt-[2px]">
      <aside className="min-h-0 flex-1 overflow-hidden border-t-2 border-l-2 border-[#666]">
        <div className="w-[345px]">
          <FillAndStroke />
          <ExportPng />
          <Arrange />
        </div>
      </aside>
    </div>
  );
}

/* ---------- bottom ---------- */

function Palette() {
  return (
    <div className="overflow-hidden border-t-2 border-[#5c5c54]">
      <div className="-mr-1 -ml-[2px] flex h-4">
        {PALETTE.map((color, i) => (
          <button key={i} type="button" aria-label={color} className="h-full flex-1" style={{ backgroundColor: color }} />
        ))}
      </div>
    </div>
  );
}

function StatusBar() {
  return (
    <div className="h-[31px] shrink-0 overflow-hidden border-t-4 border-[#f7f7f7] bg-[#efefef]">
      <div className="mt-px h-[15px] w-[30%] bg-[#cdcdcd]" />
      <div className="flex items-start pt-1">
        <span className="w-[58px] shrink-0 text-[12px] leading-3">A</span>
        <Spin id="master-opacity" value="" disabled className="h-6 w-[51px]" />
        <div className="ml-1 h-6 w-px bg-[#999]" />
        <select aria-label="Layer" className="ml-11 h-6 w-[76px] appearance-none border border-[#999] bg-linear-to-r from-white from-75% to-[#ddd] to-75%" />
        <div className="-mt-[3px] ml-auto flex h-6 w-[59px] shrink-0 border-l border-[#999] pl-1 font-['DejaVu_Sans_Mono',monospace] text-[11px] leading-3 whitespace-pre">
          X:-308. 82
        </div>
      </div>
    </div>
  );
}

export default function App() {
  return (
    <div className="relative flex h-screen flex-col overflow-hidden bg-[#efefef] font-['Noto_Sans',sans-serif] text-[12px] leading-5 text-[#1a1a1a]">
      <CommandBar />
      <ControlsBar />
      <main className="flex min-h-0 flex-1">
        <Workspace />
        <VerticalScroll />
        <Dock />
      </main>
      <Palette />
      <StatusBar />
      {/* pointer */}
      <svg width="14" height="24" viewBox="0 0 14 24" className="pointer-events-none absolute bottom-[37px] left-[638px]" aria-hidden="true">
        <path d="M1.500 1.500v17l4-3.500 2.500 6.500 2.500-1L8 14h5.500z" fill="#fff" stroke="#333" />
      </svg>
    </div>
  );
}
